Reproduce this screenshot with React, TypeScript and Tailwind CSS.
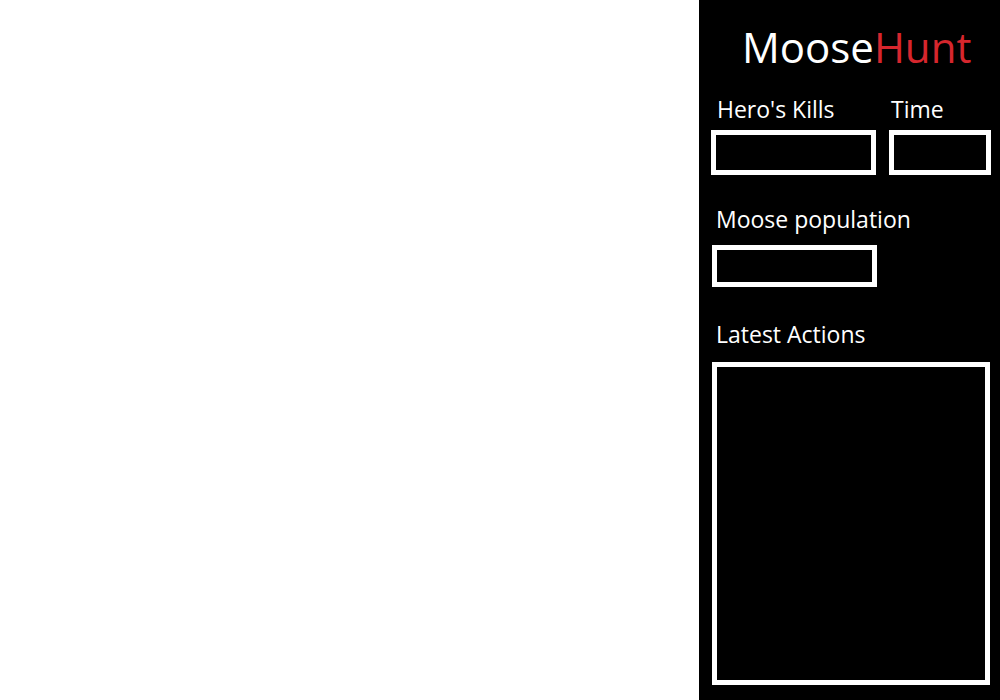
export default function App() {
  const font = { fontFamily: '"Open Sans", "Noto Sans", sans-serif' };
  return (
    <div className="flex h-[700px] w-full" style={font}>
      <div className="flex-1 bg-white" />
      <div className="flex w-[301px] flex-col bg-black pl-[12px] text-white">
        <div className="mt-[26px] pl-[31px] text-[42px] leading-[42px]">
          Moose<span className="text-[#d6262d]">Hunt</span>
        </div>
        <div className="mt-[30px] flex">
          <div className="flex flex-col">
            <div className="pl-[6px] text-[23px] leading-[23px]">Hero's Kills</div>
            <div className="mt-[9px] h-[45px] w-[165px] border-[5px] border-white" />
          </div>
          <div className="ml-[13px] flex flex-col">
            <div className="pl-[2px] text-[23px] leading-[23px]">Time</div>
            <div className="mt-[9px] h-[45px] w-[102px] border-[5px] border-white" />
          </div>
        </div>
        <div className="mt-[33px] pl-[5px] text-[23px] leading-[23px]">Moose population</div>
        <div className="mt-[14px] ml-[1px] h-[42px] w-[165px] border-[5px] border-white" />
        <div className="mt-[36px] pl-[5px] text-[23px] leading-[23px]">Latest Actions</div>
        <div className="mt-[16px] ml-[1px] h-[323px] w-[278px] border-[5px] border-white" />
      </div>
    </div>
  );
}
